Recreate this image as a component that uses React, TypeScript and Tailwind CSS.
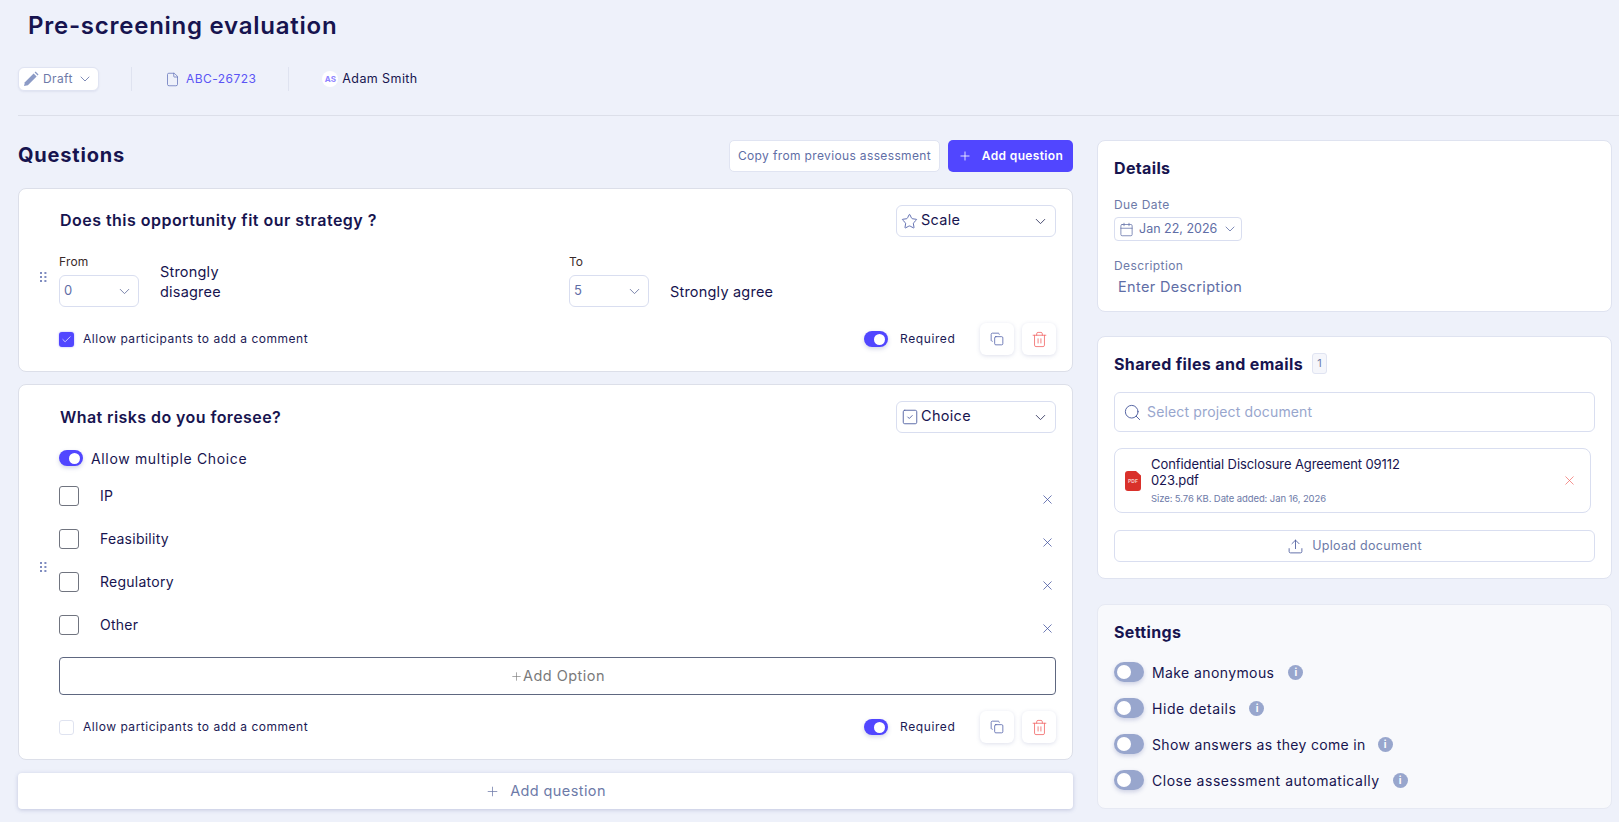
import React from "react";
import { ChevronDown, Plus, Copy, Trash2, X, Search, Upload, Calendar, Star, SquareCheck, File, Check } from "lucide-react";

function Toggle({ on, big }: { on?: boolean; big?: boolean }) {
  return (
    <span
      className={`flex shrink-0 items-center rounded-full shadow-[0_2px_4px_rgba(80,90,160,0.25)] ${big ? "h-[20px] w-[30px] px-[3px]" : "h-[16px] w-[24px] px-[3px]"} ${on ? "justify-end bg-[#5146ff]" : "justify-start bg-[#98a6cd]"}`}
    >
      <span className={`rounded-full bg-white ${big ? "h-[14px] w-[14px]" : "h-[11px] w-[11px]"}`} />
    </span>
  );
}

function Grip() {
  return (
    <svg width="7" height="11" viewBox="0 0 7 11" className="text-[#7f8cc0]" fill="currentColor">
      {[0, 4, 8].map((y) => (
        <g key={y}>
          <rect x="0" y={y} width="2" height="2" />
          <rect x="4.4" y={y} width="2" height="2" />
        </g>
      ))}
    </svg>
  );
}

function IconBtn({ red }: { red?: boolean }) {
  return (
    <span className="flex h-[32px] w-[34px] items-center justify-center rounded-[6px] bg-white shadow-[0_1px_4px_rgba(90,100,160,0.2)]">
      {red ? (
        <Trash2 size={17} strokeWidth={1.2} className="text-[#f26d6d]" />
      ) : (
        <Copy size={14} strokeWidth={1.3} className="text-[#4a5aa5]" />
      )}
    </span>
  );
}

function Bottom({ checked }: { checked?: boolean }) {
  return (
    <div className="flex h-[32px] items-center">
      {checked ? (
        <span className="flex h-[15px] w-[15px] items-center justify-center rounded-[3px] bg-[#5146ff] shadow-[0_0_2px_rgba(80,70,255,0.5)]">
          <Check size={11} strokeWidth={1.5} className="text-white" />
        </span>
      ) : (
        <span className="h-[15px] w-[15px] rounded-[3px] border border-[#dfe3f0] bg-white" />
      )}
      <span className="ml-[9px] text-[12px] tracking-[0.52px] text-[#1b1a55]">Allow participants to add a comment</span>
      <span className="ml-auto flex items-center">
        <Toggle on />
        <span className="ml-[12px] w-[80px] text-[12px] tracking-[0.6px] text-[#1b1a55]">Required</span>
        <IconBtn />
        <span className="w-[8px]" />
        <IconBtn red />
      </span>
    </div>
  );
}

function TypeSelect({ kind }: { kind: "scale" | "choice" }) {
  return (
    <span className="flex h-[32px] w-[160px] items-center rounded-[6px] border border-[#d9def0] bg-white pl-[4px] pr-[6px] text-[14.5px] tracking-[0.3px] text-[#17144f]">
      {kind === "scale" ? (
        <Star size={17} strokeWidth={1.2} className="mr-[3px] text-[#4a5aa5]" />
      ) : (
        <SquareCheck size={18} strokeWidth={1.3} className="mr-[2px] text-[#5a6aa8]" />
      )}
      <span className="pb-[2px]">{kind === "scale" ? "Scale" : "Choice"}</span>
      <ChevronDown size={17} strokeWidth={1.3} className="ml-auto text-[#3c3f66]" />
    </span>
  );
}

function NumSelect({ v }: { v: string }) {
  return (
    <span className="flex h-[32px] w-[80px] items-center justify-between rounded-[6px] border border-[#d9def0] bg-white pl-[4px] pr-[5px] text-[13px] text-[#5f6ea6]">
      {v}
      <ChevronDown size={17} strokeWidth={1.3} className="text-[#6f7aa5]" />
    </span>
  );
}

function Option({ label }: { label: string }) {
  return (
    <div className="flex h-[43px] items-start">
      <span className="mt-[1px] h-[20px] w-[20px] rounded-[3px] border border-[#70747f] bg-white" />
      <span className="ml-[21px] mt-[1px] text-[14px] leading-[20px] tracking-[0.25px] text-[#17144f]">{label}</span>
      <X size={15} strokeWidth={1.2} className="ml-auto mr-[1px] mt-[7px] text-[#3f4f9c]" />
    </div>
  );
}

function Setting({ label, gap, track }: { label: string; gap: string; track: string }) {
  return (
    <div className="flex h-[36px] items-center">
      <Toggle big />
      <span className={`ml-[8px] text-[14px] text-[#17144f] ${track} ${gap}`}>{label}</span>
      <span className="flex h-[15px] w-[15px] items-center justify-center rounded-full bg-[#98a6cd] text-[10px] font-bold text-white">i</span>
    </div>
  );
}

export default function App() {
  return (
    <div className="h-[822px] w-full overflow-hidden bg-[#eef1fa] pl-[18px] pr-[7px] text-[#17144f] font-['Inter',sans-serif]">
      <div className="flex h-[52px] items-center pl-[10px] text-[24px] font-semibold tracking-[0.75px] text-[#17144f]">
        Pre-screening evaluation
      </div>
      <div className="mt-[15px] flex h-[24px] items-center text-[12px]">
        <span className="flex h-[24px] w-[81px] items-center rounded-[6px] border border-[#e0e4f2] bg-white pl-[4px] text-[#6d7aa8] shadow-[0_1px_2px_rgba(90,100,160,0.1)]">
          <svg width="16" height="16" viewBox="0 0 16 16" fill="#8c9bc6"><path d="M1 15l.9-3.8L10.6 2.5l3 3-8.7 8.7z" /><path d="M11.6 1.5l1-.9 2.9 2.9-.9 1z" /></svg>
          <span className="ml-[4px] tracking-[0.4px]">Draft</span>
          <ChevronDown size={16} strokeWidth={1.2} className="ml-[4px] text-[#5f6ea6]" />
        </span>
        <span className="ml-[32px] h-[24px] w-px bg-[#dfe3f0]" />
        <File size={15} strokeWidth={1.2} className="ml-[33px] text-[#6070b8]" />
        <span className="ml-[6px] tracking-[0.45px] text-[#5b55f5]">ABC-26723</span>
        <span className="ml-[32px] h-[24px] w-px bg-[#dfe3f0]" />
        <span className="ml-[33px] flex h-[16px] w-[16px] items-center justify-center rounded-full bg-white text-[8px] font-bold text-[#8f84ff]">AS</span>
        <span className="ml-[4px] text-[12.5px] tracking-[0.4px] text-[#17144f]">Adam Smith</span>
      </div>
      <div className="-mr-[7px] mt-[24px] h-px bg-[#dcdfe9]" />

      <div className="mt-[24px] flex items-start">
        <div className="w-[1055px] shrink-0">
          <div className="flex h-[32px] items-center">
            <span className="pb-[2px] text-[20px] font-bold tracking-[0.8px] text-[#17144f]">Questions</span>
            <span className="ml-auto flex h-[32px] w-[211px] items-center justify-center rounded-[5px] border border-[#e0e4f2] bg-white text-[12px] tracking-[0.36px] text-[#5f6ea6]">
              Copy from previous assessment
            </span>
            <span className="ml-[8px] flex h-[32px] w-[125px] items-center justify-center rounded-[5px] bg-[#5146ff] text-[12px] font-semibold tracking-[0.35px] text-white">
              <Plus size={14} strokeWidth={1.4} className="mr-[10px]" />
              Add question
            </span>
          </div>

          <div className="mt-[16px] flex h-[184px] rounded-[8px] border border-[#dcdfe9] bg-white">
            <div className="flex w-[40px] shrink-0 items-center pb-[6px] pl-[21px]">
              <Grip />
            </div>
            <div className="flex-1 pr-[16px]">
              <div className="mt-[16px] flex h-[32px] items-center justify-between">
                <span className="ml-[1px] pb-[2px] text-[16px] font-semibold tracking-[0.47px] text-[#17144f]">Does this opportunity fit our strategy ?</span>
                <TypeSelect kind="scale" />
              </div>
              <div className="mt-[14px] flex h-[58px]">
                <div className="flex w-[510px]">
                  <div className="w-[80px]">
                    <div className="h-[24px] pt-[2px] text-[12px] leading-[18px] tracking-[0.2px] text-[#3a2a2a]">From</div>
                    <NumSelect v="0" />
                  </div>
                  <div className="ml-[21px] w-[80px] pt-[11px] text-[14.5px] leading-[20px] tracking-[0.2px] text-[#17144f]">Strongly disagree</div>
                </div>
                <div className="flex">
                  <div className="w-[80px]">
                    <div className="h-[24px] pt-[2px] text-[12px] leading-[18px] text-[#3a2a2a]">To</div>
                    <NumSelect v="5" />
                  </div>
                  <div className="ml-[21px] pt-[31px] text-[14.5px] leading-[20px] tracking-[0.2px] text-[#17144f]">Strongly agree</div>
                </div>
              </div>
              <div className="mt-[14px]">
                <Bottom checked />
              </div>
            </div>
          </div>

          <div className="mt-[12px] flex h-[376px] rounded-[8px] border border-[#dcdfe9] bg-white">
            <div className="flex w-[40px] shrink-0 items-center pb-[9px] pl-[21px]">
              <Grip />
            </div>
            <div className="flex-1 pr-[16px]">
              <div className="mt-[16px] flex h-[32px] items-center justify-between">
                <span className="ml-[1px] text-[16px] font-semibold tracking-[0.42px] text-[#17144f]">What risks do you foresee?</span>
                <TypeSelect kind="choice" />
              </div>
              <div className="mt-[17px] flex h-[16px] items-center">
                <Toggle on />
                <span className="ml-[8px] text-[14px] tracking-[0.65px] text-[#17144f]">Allow multiple Choice</span>
              </div>
              <div className="mt-[19px]">
                <Option label="IP" />
                <Option label="Feasibility" />
                <Option label="Regulatory" />
                <Option label="Other" />
              </div>
              <div className="flex h-[38px] items-center justify-center rounded-[4px] border border-[#5e6780] bg-white text-[14.5px] tracking-[0.45px] text-[#7a7a7a]">
                <Plus size={13} strokeWidth={1.2} />
                Add Option
              </div>
              <div className="mt-[16px]">
                <Bottom />
              </div>
            </div>
          </div>

          <div className="mt-[13px] flex h-[36px] items-center justify-center rounded-[4px] bg-white text-[14.5px] tracking-[0.4px] text-[#6d7aa8] shadow-[0_1px_4px_rgba(90,100,160,0.3)]">
            <Plus size={15} strokeWidth={1.2} className="mr-[10px]" />
            Add question
          </div>
        </div>

        <div className="ml-[24px] w-[515px] shrink-0">
          <div className="h-[172px] rounded-[8px] border border-[#dfe3f0] bg-white pl-[16px] pt-[15px]">
            <div className="text-[16px] font-bold leading-[24px] tracking-[0.35px] text-[#17144f]">Details</div>
            <div className="mt-[16px] text-[12px] leading-[18px] tracking-[0.4px] text-[#6d7aa8]">Due Date</div>
            <span className="mt-[3px] flex h-[24px] w-[128px] items-center rounded-[4px] border border-[#d9def0] pl-[4px] text-[12.5px] tracking-[0px] text-[#5f6ea6]">
              <Calendar size={15} strokeWidth={1.2} />
              <span className="ml-[5px]">Jan 22, 2026</span>
              <ChevronDown size={16} strokeWidth={1.2} className="ml-auto mr-[3px]" />
            </span>
            <div className="mt-[16px] text-[12px] leading-[18px] tracking-[0.4px] text-[#6d7aa8]">Description</div>
            <div className="ml-[4px] mt-[2px] text-[14.5px] leading-[20px] tracking-[0.35px] text-[#5f6ea6]">Enter Description</div>
          </div>

          <div className="mt-[24px] h-[243px] rounded-[8px] border border-[#dfe3f0] bg-white pl-[16px] pr-[16px] pt-[16px]">
            <div className="flex h-[21px] items-center">
              <span className="text-[16px] font-bold tracking-[0.35px] text-[#17144f]">Shared files and emails</span>
              <span className="ml-[9px] flex h-[21px] w-[15px] items-center justify-center rounded-[3px] border border-[#e0e4f2] bg-[#f5f6fb] text-[11px] text-[#6d7aa8]">1</span>
            </div>
            <div className="mt-[18px] flex h-[40px] items-center rounded-[6px] border border-[#d9def0] pl-[8px] text-[14px] tracking-[0.15px] text-[#98a6cd]">
              <Search size={19} strokeWidth={1.2} className="text-[#4f5f9f]" />
              <span className="ml-[5px] pb-[2px]">Select project document</span>
            </div>
            <div className="mt-[16px] flex h-[65px] w-[477px] items-center rounded-[8px] border border-[#d9def0] pl-[10px] pr-[13px]">
              <svg width="16" height="20" viewBox="0 0 16 20" className="shrink-0">
                <path d="M3 0h8l5 4.500V17a3 3 0 0 1-3 3H3a3 3 0 0 1-3-3V3a3 3 0 0 1 3-3z" fill="#d9312b" />
                <text x="8" y="12" textAnchor="middle" fontSize="5" fontWeight="700" fill="#f6c9c6" fontFamily="Inter, sans-serif">PDF</text>
              </svg>
              <div className="ml-[10px] w-[265px]">
                <div className="text-[13px] leading-[16px] tracking-[-0.08px] text-[#17144f]">Confidential Disclosure Agreement 09112<br />023.pdf</div>
                <div className="mt-[4px] text-[9.5px] leading-[14px] tracking-[-0.1px] text-[#6d7aa8]">Size: 5.76 KB. Date added: Jan 16, 2026</div>
              </div>
              <X size={15} strokeWidth={1.1} className="ml-auto text-[#f0635e]" />
            </div>
            <div className="mt-[17px] flex h-[32px] items-center justify-center rounded-[6px] border border-[#d9def0] text-[12.5px] tracking-[0.3px] text-[#6d7aa8]">
              <Upload size={17} strokeWidth={1.2} className="mr-[8px] text-[#4a5a9c]" />
              Upload document
            </div>
          </div>

          <div className="mt-[25px] h-[205px] rounded-[8px] border border-[#e6e9f3] bg-[#f8f9fc] pl-[16px] pt-[15px]">
            <div className="text-[16px] font-bold leading-[24px] tracking-[0.35px] text-[#17144f]">Settings</div>
            <div className="mt-[10px]">
              <Setting label="Make anonymous" gap="mr-[14px]" track="tracking-[0.4px]" />
              <Setting label="Hide details" gap="mr-[13px]" track="tracking-[0.55px]" />
              <Setting label="Show answers as they come in" gap="mr-[12px]" track="tracking-[0.33px]" />
              <Setting label="Close assessment automatically" gap="mr-[13px]" track="tracking-[0.52px]" />
            </div>
          </div>
        </div>
      </div>
    </div>
  );
}
